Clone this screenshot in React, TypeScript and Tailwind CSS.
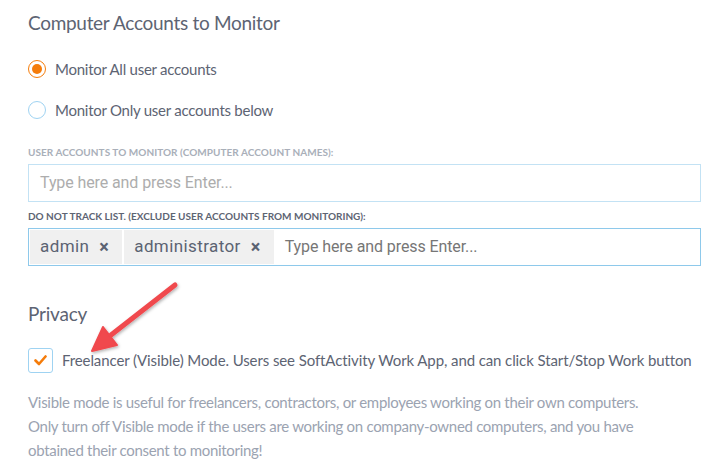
import React from 'react';

const Tag = ({ label }: { label: string }) => (
  <div className="flex items-center gap-[10px] bg-[#f0f0f0] pl-[10px] pr-[13px] h-full text-[17px] text-[#5b6372] font-['Roboto',sans-serif] tracking-[0.4px]">
    <span>{label}</span>
    <span className="text-[18px] font-bold text-[#5b6372] leading-none">×</span>
  </div>
);

const App = () => {
  return (
    <div className="relative w-[728px] h-[468px] bg-white font-['Lato',sans-serif] tracking-[-0.25px] pl-[28px] pr-[27px] pt-[10px] overflow-hidden">
      <h1 className="text-[19px] tracking-[-0.3px] text-[#5d6473] leading-[26px]">Computer Accounts to Monitor</h1>

      <div className="mt-[24px] flex flex-col gap-[23px]">
        <label className="flex items-center gap-[9px] h-[18px]">
          <span className="w-[18px] h-[18px] rounded-full border border-[#f57c0a] flex items-center justify-center">
            <span className="w-[10px] h-[10px] rounded-full bg-[#f57c0a]" />
          </span>
          <span className="text-[15px] text-[#5d6473]">Monitor All user accounts</span>
        </label>
        <label className="flex items-center gap-[9px] h-[18px]">
          <span className="w-[18px] h-[18px] rounded-full border border-[#9fd3f2]" />
          <span className="text-[15px] text-[#5d6473]">Monitor Only user accounts below</span>
        </label>
      </div>

      <div className="mt-[27px] text-[10px] font-bold uppercase text-[#a9afb9] tracking-[0.05px] leading-[12px]">
        User accounts to monitor (computer account names):
      </div>
      <div className="mt-[6px] h-[38px] border border-[#c3e2f4] flex items-center px-[11px] text-[16px] tracking-[-0.1px] text-[#adadad] font-['Roboto',sans-serif]">
        Type here and press Enter...
      </div>

      <div className="mt-[8px] text-[10px] font-bold uppercase text-[#5d6473] tracking-[0px] leading-[12px]">
        Do not track list. (Exclude user accounts from monitoring):
      </div>
      <div className="mt-[6px] h-[38px] border border-[#8ec9eb] flex items-stretch p-px gap-[2px]">
        <Tag label="admin" />
        <Tag label="administrator" />
        <span className="self-center ml-[9px] text-[16px] tracking-[-0.1px] text-[#767676] font-['Roboto',sans-serif]">
          Type here and press Enter...
        </span>
      </div>

      <h2 className="mt-[35px] text-[19px] tracking-[-0.2px] text-[#5d6473] leading-[26px]">Privacy</h2>

      <label className="mt-[21px] flex items-center gap-[9px]">
        <span className="w-[25px] h-[25px] rounded-[3px] border border-[#9fd3f2] flex items-center justify-center">
          <svg width="13" height="11" viewBox="0 0 13 11">
            <path d="M1.5 5.5 L5 9 L11.5 1.5" fill="none" stroke="#f57c0a" strokeWidth="2.6" strokeLinecap="round" strokeLinejoin="round" />
          </svg>
        </span>
        <span className="text-[15px] text-[#5d6473] tracking-[-0.1px] whitespace-nowrap">
          Freelancer (Visible) Mode. Users see SoftActivity Work App, and can click Start/Stop Work button
        </span>
      </label>

      <p className="mt-[17px] text-[15px] leading-[24px] tracking-[-0.3px] text-[#9ba3b1] whitespace-nowrap">
        Visible mode is useful for freelancers, contractors, or employees working on their own computers.
        <br />
        Only turn off Visible mode if the users are working on company-owned computers, and you have
        <br />
        obtained their consent to monitoring!
      </p>

      <svg className="absolute left-0 top-0 pointer-events-none" width="728" height="468" viewBox="0 0 728 468">
        <defs>
          <filter id="sh" x="-20%" y="-20%" width="140%" height="140%">
            <feDropShadow dx="1" dy="1.5" stdDeviation="1.5" floodColor="#000" floodOpacity="0.3" />
          </filter>
        </defs>
        <g filter="url(#sh)">
          <line x1="175" y1="285" x2="111" y2="335" stroke="#f0484d" strokeWidth="5" strokeLinecap="round" />
          <polygon points="92,351 103,327 117,345" fill="#f0484d" stroke="#f0484d" strokeWidth="2" strokeLinejoin="round" />
        </g>
      </svg>
    </div>
  );
};

export default App;
